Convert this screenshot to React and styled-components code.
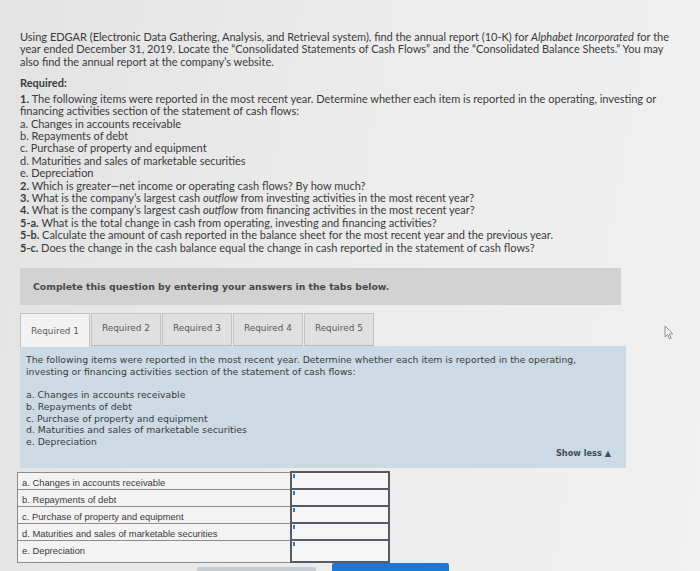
import React from "react";
import styled, { createGlobalStyle } from "styled-components";

const GlobalStyle = createGlobalStyle`
  html, body {
    margin: 0;
    padding: 0;
  }
  body {
    background: linear-gradient(100deg, #e3e3e3 0%, #ebebeb 45%, #f1f1f1 100%);
    font-family: "Lato", "Liberation Sans", sans-serif;
    color: #3b3b3b;
    overflow: hidden;
  }
`;

const questions = [
  { num: "1.", text: "The following items were reported in the most recent year. Determine whether each item is reported in the operating, investing or" },
  { text: "financing activities section of the statement of cash flows:" },
  { text: "a. Changes in accounts receivable" },
  { text: "b. Repayments of debt" },
  { text: "c. Purchase of property and equipment" },
  { text: "d. Maturities and sales of marketable securities" },
  { text: "e. Depreciation" },
  { num: "2.", text: "Which is greater—net income or operating cash flows? By how much?" },
  { num: "3.", text: <>What is the company’s largest cash <i>outflow</i> from investing activities in the most recent year?</> },
  { num: "4.", text: <>What is the company’s largest cash <i>outflow</i> from financing activities in the most recent year?</> },
  { num: "5-a.", text: "What is the total change in cash from operating, investing and financing activities?" },
  { num: "5-b.", text: "Calculate the amount of cash reported in the balance sheet for the most recent year and the previous year." },
  { num: "5-c.", text: "Does the change in the cash balance equal the change in cash reported in the statement of cash flows?" },
];

const items = [
  "a. Changes in accounts receivable",
  "b. Repayments of debt",
  "c. Purchase of property and equipment",
  "d. Maturities and sales of marketable securities",
  "e. Depreciation",
];

const tabs = ["Required 1", "Required 2", "Required 3", "Required 4", "Required 5"];

const Cursor = () => (
  <CursorMark width="10" height="15" viewBox="0 0 10 15">
    <path
      d="M1 1 L1 12 L3.6 9.6 L5.6 14 L7.2 13.2 L5.3 8.9 L8.8 8.9 Z"
      fill="#f4f4f4"
      stroke="#8a8a8a"
      strokeWidth="0.9"
      strokeLinejoin="round"
    />
  </CursorMark>
);

const App = () => {
  return (
    <>
      <GlobalStyle />
      <Page>
        <Intro>
          Using EDGAR (Electronic Data Gathering, Analysis, and Retrieval system), find the annual report (10-K) for{" "}
          <i>Alphabet Incorporated</i> for the
          <br />
          year ended December 31, 2019. Locate the “Consolidated Statements of Cash Flows” and the “Consolidated Balance Sheets.” You may
          <br />
          also find the annual report at the company’s website.
        </Intro>

        <RequiredTitle>Required:</RequiredTitle>
        <QuestionList>
          {questions.map((q, i) => (
            <QuestionLine key={i}>
              {q.num && <Num>{q.num} </Num>}
              {q.text}
            </QuestionLine>
          ))}
        </QuestionList>

        <InstructionBar>Complete this question by entering your answers in the tabs below.</InstructionBar>

        <TabRow>
          {tabs.map((t, i) => (
            <Tab key={t} $active={i === 0}>
              {t}
            </Tab>
          ))}
        </TabRow>

        <Panel>
          <PanelText>
            The following items were reported in the most recent year. Determine whether each item is reported in the operating,
            <br />
            investing or financing activities section of the statement of cash flows:
          </PanelText>
          <PanelItems>
            {items.map((it) => (
              <div key={it}>{it}</div>
            ))}
          </PanelItems>
          <ShowLess>Show less ▲</ShowLess>
        </Panel>

        <AnswerTable>
          <tbody>
            {items.map((it, i) => (
              <tr key={it}>
                <LabelCell $last={i === items.length - 1}>{it}</LabelCell>
                <InputCell />
              </tr>
            ))}
          </tbody>
        </AnswerTable>

        <ButtonRow>
          <NavButton />
          <NavButton $primary />
        </ButtonRow>

        <Cursor />
      </Page>
    </>
  );
};

const Page = styled.div`
  position: relative;
  width: 700px;
  height: 571px;
  box-sizing: border-box;
  padding: 31px 0 0 20px;
  overflow: hidden;
`;

const Intro = styled.p`
  margin: 0;
  font-size: 11px;
  line-height: 12.3px;
  white-space: nowrap;
`;

const RequiredTitle = styled.div`
  margin: 9.5px 0 3px;
  font-size: 11px;
  font-weight: 700;
  line-height: 12.3px;
`;

const QuestionList = styled.div`
  font-size: 11px;
  line-height: 12.4px;
  white-space: nowrap;
`;

const QuestionLine = styled.div``;

const Num = styled.b`
  font-weight: 700;
`;

const InstructionBar = styled.div`
  display: flex;
  align-items: center;
  box-sizing: border-box;
  width: 601px;
  height: 37.5px;
  margin-top: 14px;
  padding-left: 13px;
  background: #d2d2d2;
  font-family: "DejaVu Sans", "Liberation Sans", sans-serif;
  font-size: 9.3px;
  font-weight: 700;
  color: #474747;
`;

const TabRow = styled.div`
  display: flex;
  align-items: flex-end;
  gap: 1px;
  margin-top: 7.5px;
`;

const Tab = styled.div`
  display: flex;
  align-items: center;
  box-sizing: border-box;
  height: ${(p) => (p.$active ? "34px" : "33px")};
  padding: ${(p) => (p.$active ? "2px 10px 0" : "0 10px 2px")};
  background: ${(p) => (p.$active ? "#f2f2f2" : "#e0e0e0")};
  border: 1px solid #c2c2c2;
  border-bottom: ${(p) => (p.$active ? "none" : "1px solid #b9b9b9")};
  margin-bottom: ${(p) => (p.$active ? "-1px" : "0")};
  font-family: "DejaVu Sans", "Liberation Sans", sans-serif;
  font-size: 8.9px;
  color: #5a5a5a;
  position: relative;
`;

const Panel = styled.div`
  box-sizing: border-box;
  width: 606px;
  padding: 8.5px 8px 8.5px 6px;
  background: #ccdae6;
  font-family: "DejaVu Sans", "Liberation Sans", sans-serif;
  font-size: 9.3px;
  line-height: 11.5px;
  color: #3a3a3a;
  white-space: nowrap;
`;

const PanelText = styled.div``;

const PanelItems = styled.div`
  margin-top: 11.5px;
  line-height: 11.8px;
`;

const ShowLess = styled.div`
  text-align: right;
  padding-right: 7px;
  font-size: 8.2px;
  font-weight: 700;
  color: #3e4d5a;
`;

const AnswerTable = styled.table`
  border-collapse: collapse;
  margin: 3.5px 0 0 -3px;
  font-family: "Liberation Sans", Arial, sans-serif;
  font-size: 9.4px;
  color: #3a3a3a;
`;

const LabelCell = styled.td`
  box-sizing: border-box;
  width: 273px;
  height: ${(p) => (p.$last ? "22px" : "17px")};
  padding: 0 4px;
  border: 1px solid #8c8c8c;
  background: #f3f3f3;
  white-space: nowrap;
  line-height: 12px;
  vertical-align: ${(p) => (p.$last ? "middle" : "bottom")};
`;

const InputCell = styled.td`
  position: relative;
  box-sizing: border-box;
  width: 98px;
  border: 2px solid #575b63;
  background: #f6f6f6;

  &::before {
    content: "";
    position: absolute;
    left: 1px;
    top: 1px;
    width: 2px;
    height: 4px;
    background: #3a78c4;
  }
`;

const ButtonRow = styled.div`
  display: flex;
  align-items: flex-start;
  gap: 16px;
  margin-left: 177px;
`;

const NavButton = styled.div`
  width: ${(p) => (p.$primary ? "117px" : "119px")};
  height: 20px;
  margin-top: ${(p) => (p.$primary ? "0" : "4px")};
  border-radius: 2px;
  background: ${(p) => (p.$primary ? "#1f77d2" : "#c6ccd2")};
`;

const CursorMark = styled.svg`
  position: absolute;
  left: 664px;
  top: 325px;
`;

export default App;
